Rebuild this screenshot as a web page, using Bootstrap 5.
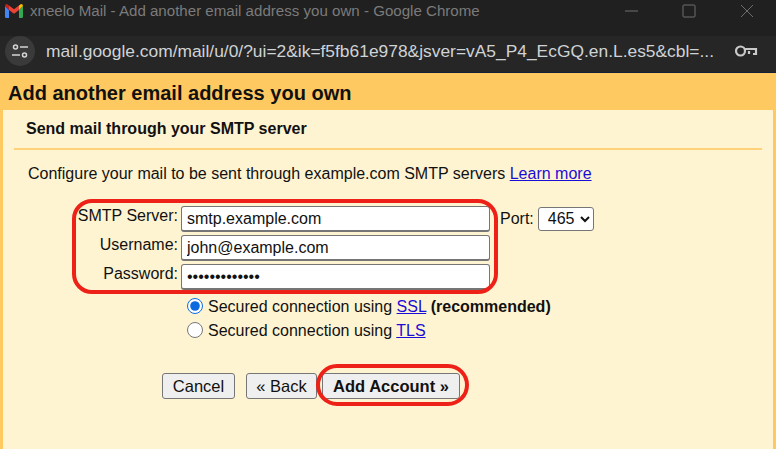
<!DOCTYPE html>
<html lang="en">
<head>
  <meta charset="UTF-8" />
  <title>xneelo Mail - Add another email address you own</title>
  <link href="https://cdn.jsdelivr.net/npm/bootstrap@5.3.0/dist/css/bootstrap.min.css" rel="stylesheet" />
  <style>
    html, body { height: 449px; overflow: hidden; }
    body { font-family: "Liberation Sans", Arial, sans-serif; font-size: 16px; color: #111; background: #ffc962; }
    .title-strip { height: 36px; background: #202020; color: #7b7b7b; font-size: 15.1px; padding: 0 0 14px 5px; }
    .title-strip svg.gmail { margin-right: 7px; }
    .win-btns { color: #6e6e6e; gap: 44px; margin-right: 22px; }
    .win-btns svg { display: block; }
    .addr-strip { height: 37px; background: #262626; border-bottom: 1px solid #14203a; padding: 0 18px 6px 5px; color: #cfd3d6; font-size: 17.4px; }
    .site-chip { width: 30px; height: 30px; border-radius: 50%; background: #3a3a3a; margin-right: 11px; }
    .addr-text { white-space: nowrap; }
    .page-head { height: 37px; padding: 8px 0 0 8px; font-size: 20px; line-height: 24px; font-weight: 700; color: #111; }
    .inner-panel { background: #fff4d1; margin: 0 3px; height: 339px; position: relative; }
    .sect-title { font-size: 16px; line-height: 18px; font-weight: 700; padding: 10px 0 10px 23px; height: 38px; }
    .sect-rule { height: 2px; background: #ffd27a; margin: 0 11px; }
    .intro { font-size: 16px; line-height: 20px; margin: 14px 0 0 25px; }
    .intro a, .radio-line a { color: #1a0dd8; }
    .smtp-form { margin-top: 20px; }
    .field-row { height: 29px; }
    .field-lbl { width: 176px; text-align: right; line-height: 18px; margin-bottom: 6px; padding-right: 1px; white-space: nowrap; }
    .field-box { width: 309px; height: 26px; margin-left: 2px; border: 1px solid #767676; border-bottom-width: 2px; border-radius: 3px; background: #fff; padding: 1px 5px 0; font: 16px/22px "Liberation Sans", Arial, sans-serif; color: #111; outline: 0; }
    .port-lbl { margin-left: 10px; line-height: 18px; }
    .port-sel { width: 56px; height: 24px; margin-left: 4px; padding: 0 0 0 5px; font: 16px "Liberation Sans", Arial, sans-serif; background: #fff; border: 1px solid #767676; border-radius: 3px; color: #111; }
    .radio-block { margin: 4px 0 0 184px; }
    .radio-line { height: 24px; line-height: 24px; white-space: nowrap; }
    .radio-line input { width: 16px; height: 16px; margin: 0 5px 0 0; accent-color: #0a6be0; vertical-align: -2px; }
    .btn-line { margin: 30px 0 0 159px; }
    .plain-btn { height: 26px; padding: 0; text-align: center; font: 16.5px/22px "Liberation Sans", Arial, sans-serif; color: #111; background: #efefef; border: 1px solid #767676; border-radius: 3px; }
    .btn-cancel { width: 73px; }
    .btn-back { width: 71px; margin-left: 11px; }
    .btn-add { width: 138px; margin-left: 5px; font-weight: 700; }
    .red-ring { position: absolute; border: 4px solid #ee2118; pointer-events: none; }
    .ring-fields { left: 69px; top: 89px; width: 426px; height: 95px; border-radius: 20px; }
    .ring-add { left: 313px; top: 254px; width: 153px; height: 42px; border-radius: 21px; }
  </style>
</head>
<body>
  <div class="title-strip d-flex align-items-center">
    <svg class="gmail" width="18" height="14" viewBox="0 0 18 14">
      <path d="M0 2v10.500q0 1.500 1.500 1.500H4V6z" fill="#4285f4"/>
      <path d="M14 14h2.500q1.500 0 1.500-1.500V2l-4 4z" fill="#34a853"/>
      <path d="M14 6V1.500L16 0q2 0 2 2z" fill="#fbbc04"/>
      <path d="M4 6V1.500L9 5.300l5-3.800V6L9 9.800z" fill="#ea4335"/>
      <path d="M0 2q0-2 2-2l2 1.500V6z" fill="#c5221f"/>
    </svg>
    <span>xneelo Mail - Add another email address you own - Google Chrome</span>
    <div class="win-btns ms-auto d-flex align-items-center">
      <svg width="14" height="14" viewBox="0 0 14 14"><path d="M1 7h13" stroke="currentColor" stroke-width="1"/></svg>
      <svg width="14" height="14" viewBox="0 0 14 14"><rect x="1" y="1" width="12" height="12" rx="1" fill="none" stroke="currentColor"/></svg>
      <svg width="14" height="14" viewBox="0 0 14 14"><path d="M1 1l12 12M13 1L1 13" stroke="currentColor" fill="none"/></svg>
    </div>
  </div>

  <div class="addr-strip d-flex align-items-center">
    <div class="site-chip d-flex align-items-center justify-content-center flex-shrink-0">
      <svg width="16" height="16" viewBox="0 0 16 16" fill="none" stroke="#d5d5d5" stroke-width="1.500">
        <circle cx="3.500" cy="4" r="2"/><path d="M8 4h8M0 12h8"/><circle cx="12.500" cy="12" r="2"/>
      </svg>
    </div>
    <div class="addr-text">mail.google.com/mail/u/0/?ui=2&amp;ik=f5fb61e978&amp;jsver=vA5_P4_EcGQ.en.L.es5&amp;cbl=...</div>
    <svg class="ms-auto" width="24" height="14" viewBox="0 0 24 14" fill="none" stroke="#c9c9c9" stroke-width="2.200">
      <circle cx="6.500" cy="7" r="4.500"/><path d="M11 5h11v5h-3M15 10V7"/>
    </svg>
  </div>

  <div class="page-head">Add another email address you own</div>

  <div class="inner-panel">
    <div class="sect-title">Send mail through your SMTP server</div>
    <div class="sect-rule"></div>
    <p class="intro mb-0">Configure your mail to be sent through example.com SMTP servers <a href="#">Learn more</a></p>

    <form class="smtp-form">
      <div class="field-row d-flex align-items-center">
        <label class="field-lbl" for="smtpHost">SMTP Server:</label>
        <input class="field-box" id="smtpHost" type="text" value="smtp.example.com" />
        <span class="port-lbl">Port:</span>
        <select class="port-sel"><option>465</option><option>587</option></select>
      </div>
      <div class="field-row d-flex align-items-center">
        <label class="field-lbl" for="smtpUser">Username:</label>
        <input class="field-box" id="smtpUser" type="text" value="john@example.com" />
      </div>
      <div class="field-row d-flex align-items-center">
        <label class="field-lbl" for="smtpPass">Password:</label>
        <input class="field-box" id="smtpPass" type="password" value="examplepasswd" />
      </div>

      <div class="radio-block">
        <div class="radio-line"><input type="radio" name="secure" checked />Secured connection using <a href="#">SSL</a> <b>(recommended)</b></div>
        <div class="radio-line"><input type="radio" name="secure" />Secured connection using <a href="#">TLS</a></div>
      </div>

      <div class="btn-line d-flex">
        <button type="button" class="plain-btn btn-cancel">Cancel</button>
        <button type="button" class="plain-btn btn-back">« Back</button>
        <button type="button" class="plain-btn btn-add">Add Account »</button>
      </div>
    </form>

    <div class="red-ring ring-fields"></div>
    <div class="red-ring ring-add"></div>
  </div>

  <script src="https://cdn.jsdelivr.net/npm/bootstrap@5.3.0/dist/js/bootstrap.bundle.min.js"></script>
</body>
</html>
